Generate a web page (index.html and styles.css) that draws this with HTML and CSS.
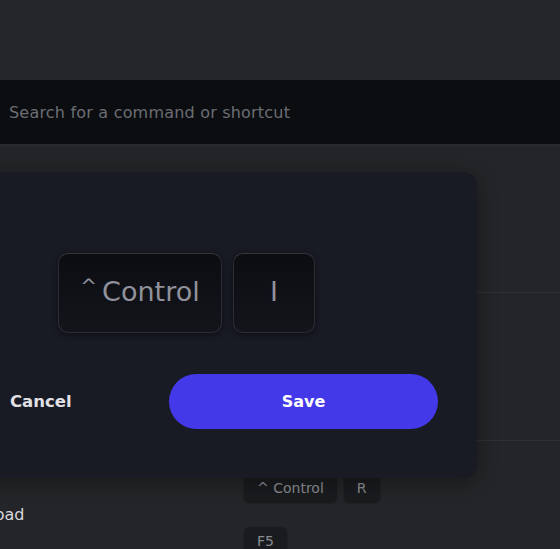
FILE: index.html
```html
<!DOCTYPE html>
<html lang="en">
<head>
    <meta charset="UTF-8">
    <title>Shortcuts</title>
    <link rel="stylesheet" href="styles.css">
</head>
<body>
    <div class="topbar"></div>
    <div class="search">Search for a command or shortcut</div>

    <div class="list">
        <div class="row">
            <div class="label">Toggle Inspector</div>
            <div class="keys">
                <div class="combo"><span class="kbd">^ Control</span><span class="kbd">I</span></div>
                <div class="combo"><span class="kbd">F12</span></div>
            </div>
        </div>
        <div class="row">
            <div class="label">Hard Reload</div>
            <div class="keys">
                <div class="combo"><span class="kbd">^ Control</span><span class="kbd">⇧ Shift</span><span class="kbd">R</span></div>
                <div class="combo"><span class="kbd">⇧ Shift</span><span class="kbd">F5</span></div>
            </div>
        </div>
        <div class="row">
            <div class="label">Reload</div>
            <div class="keys">
                <div class="combo"><span class="kbd">^ Control</span><span class="kbd">R</span></div>
                <div class="combo"><span class="kbd">F5</span></div>
            </div>
        </div>
    </div>

    <div class="modal">
        <div class="capture">
            <div class="bigkey wide"><span class="caret">^</span>Control</div>
            <div class="bigkey">I</div>
        </div>
        <div class="actions">
            <button class="cancel">Cancel</button>
            <button class="save">Save</button>
        </div>
    </div>
</body>
</html>
```

FILE: styles.css
```css
body {
    margin: 0;
    background: #242528;
    font-family: "DejaVu Sans", sans-serif;
    overflow: hidden;
    height: 549px;
    position: relative;
}
.topbar {
    height: 80px;
    background: #25262a;
}
.search {
    height: 67px;
    box-sizing: border-box;
    padding: 22px 0 0 9px;
    background: #0c0d11;
    color: #6b6d73;
    font-size: 16px;
    letter-spacing: 0.2px;
    line-height: 21px;
    border-bottom: 3px solid #28292d;
}
.list {
    margin-left: -30px;
}
.row {
    display: flex;
    align-items: center;
    height: 148px;
    box-sizing: border-box;
    border-bottom: 1px solid #2f3034;
}
.row:first-child {
    height: 146px;
}
.label {
    width: 274px;
    color: #d9d9de;
    font-size: 16px;
}
.keys {
    display: flex;
    flex-direction: column;
    gap: 25px;
}
.combo {
    display: flex;
    gap: 7px;
}
.kbd {
    height: 28px;
    line-height: 28px;
    padding: 0 13px;
    background: #1a1b1e;
    border-radius: 6px;
    color: #8a8b91;
    font-size: 14px;
    box-shadow: 0 1px 2px rgba(0,0,0,0.4);
}
.modal {
    position: absolute;
    left: -40px;
    top: 172px;
    width: 517px;
    height: 306px;
    box-sizing: border-box;
    padding: 81px 39px 0 50px;
    background: #181a24;
    border-radius: 14px;
    box-shadow: 0 4px 20px rgba(0,0,0,0.35);
}
.capture {
    display: flex;
    gap: 11px;
    margin-left: 48px;
}
.bigkey {
    width: 82px;
    height: 80px;
    box-sizing: border-box;
    display: flex;
    align-items: center;
    justify-content: center;
    padding-bottom: 4px;
    background: linear-gradient(#0c0d11, #14151b);
    border: 1px solid #2b2c34;
    border-top-color: #34353d;
    border-radius: 10px;
    color: #90919c;
    font-size: 27px;
    box-shadow: 0 2px 6px rgba(0,0,0,0.4);
}
.bigkey.wide {
    width: 164px;
}
.caret {
    font-size: 20px;
    margin-right: 5px;
    position: relative;
    top: -5px;
}
.actions {
    display: flex;
    align-items: center;
    margin-top: 41px;
}
button {
    font-family: inherit;
    font-weight: 700;
    font-size: 16px;
    border: none;
    cursor: pointer;
}
.cancel {
    background: none;
    color: #e1e1e6;
    padding: 0;
    font-size: 16.5px;
}
.save {
    margin-left: auto;
    width: 269px;
    height: 55px;
    border-radius: 28px;
    background: #4339e8;
    color: #ffffff;
}
```
